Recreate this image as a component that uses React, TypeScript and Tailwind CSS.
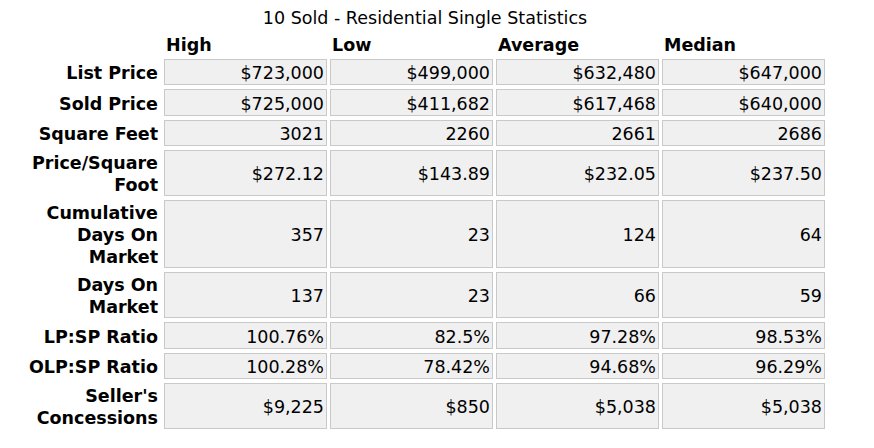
import { Fragment } from 'react';

const COLUMNS = ['High', 'Low', 'Average', 'Median'];

interface IStatRow {
  label: string[];
  height: string;
  values: string[];
}

const ROWS: IStatRow[] = [
  { label: ['List Price'], height: 'h-[26px]', values: ['$723,000', '$499,000', '$632,480', '$647,000'] },
  { label: ['Sold Price'], height: 'h-[27px]', values: ['$725,000', '$411,682', '$617,468', '$640,000'] },
  { label: ['Square Feet'], height: 'h-[26px]', values: ['3021', '2260', '2661', '2686'] },
  { label: ['Price/Square', 'Foot'], height: 'h-[46px]', values: ['$272.12', '$143.89', '$232.05', '$237.50'] },
  { label: ['Cumulative', 'Days On', 'Market'], height: 'h-[68px]', values: ['357', '23', '124', '64'] },
  { label: ['Days On', 'Market'], height: 'h-[46px]', values: ['137', '23', '66', '59'] },
  { label: ['LP:SP Ratio'], height: 'h-[27px]', values: ['100.76%', '82.5%', '97.28%', '98.53%'] },
  { label: ['OLP:SP Ratio'], height: 'h-[26px]', values: ['100.28%', '78.42%', '94.68%', '96.29%'] },
  { label: ["Seller's", 'Concessions'], height: 'h-[46px]', values: ['$9,225', '$850', '$5,038', '$5,038'] },
];

export default function App() {
  return (
    <div
      className="h-[448px] w-[874px] bg-white pl-[25px] pt-[7px] text-[17.5px] leading-[22px] text-black"
      style={{ fontFamily: '"DejaVu Sans", Verdana, sans-serif' }}
    >
      <div className="w-[800px]">
        <p className="text-center">10 Sold - Residential Single Statistics</p>

        <div className="mt-[5px] grid grid-cols-[136px_163px_163px_163px_163px] gap-x-[3px] gap-y-[4px]">
          {/* header */}
          <div className="h-[21px]" />
          {COLUMNS.map((col) => (
            <div key={col} className="h-[21px] pl-[2px] font-bold">
              {col}
            </div>
          ))}

          {/* rows */}
          {ROWS.map((row) => (
            <Fragment key={row.label.join('-')}>
              <div
                className={`${row.height} flex flex-col items-end justify-center pr-[3px] pt-[2px] text-right font-bold`}
              >
                {row.label.map((line) => (
                  <span key={line} className="whitespace-nowrap">{line}</span>
                ))}
              </div>
              {row.values.map((val, i) => (
                <div
                  key={i}
                  className={`${row.height} flex items-center justify-end border border-[#c9c9c9] bg-[#f0f0f0] pr-[2px] pt-[2px]`}
                >
                  {val}
                </div>
              ))}
            </Fragment>
          ))}
        </div>
      </div>
    </div>
  );
}
